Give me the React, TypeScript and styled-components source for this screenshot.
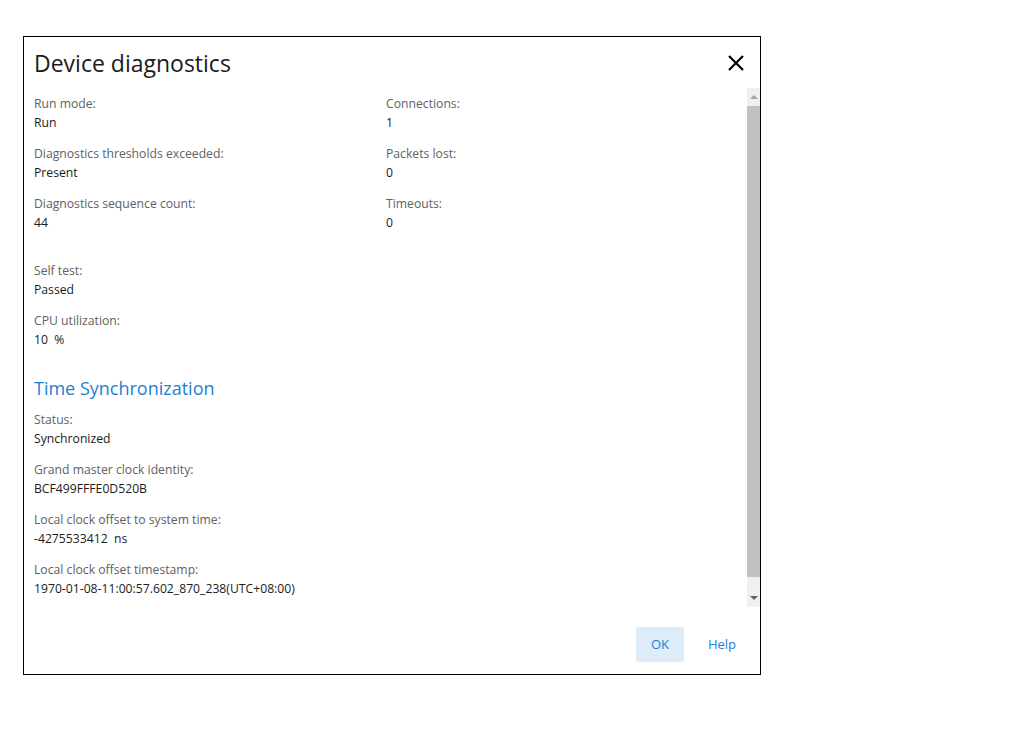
import React from 'react'
import styled, { createGlobalStyle } from 'styled-components'

const GlobalStyle = createGlobalStyle`
  body {
    margin: 0;
    background: #fff;
    font-family: "Open Sans", "Noto Sans", sans-serif;
  }
`

const Page = styled.div`
  padding: 36px 0 0 23px;
`

const Dialog = styled.div`
  width: 736px;
  height: 637px;
  border: 1px solid #000;
  display: flex;
  flex-direction: column;
  background: #fff;
`

const Header = styled.div`
  height: 51px;
  display: flex;
  align-items: center;
  justify-content: space-between;
  padding: 0 14px 0 10px;
`

const Title = styled.h1`
  margin: 0;
  font-size: 23px;
  font-weight: 400;
  color: #1b1b1b;
`

const CloseButton = styled.button`
  border: none;
  background: none;
  padding: 0;
  width: 20px;
  height: 20px;
  display: flex;
  align-items: center;
  justify-content: center;
  cursor: pointer;
`

const Body = styled.div`
  flex: 1;
  display: flex;
  min-height: 0;
`

const Content = styled.div`
  flex: 1;
  padding: 6px 10px 0;
  overflow: hidden;
`

const Grid = styled.div`
  display: grid;
  grid-template-columns: 352px 1fr;
  margin-bottom: 17px;
`

const Field = styled.div`
  margin-bottom: 12px;
  font-size: 12.2px;
  line-height: 19px;
`

const Label = styled.div`
  color: #616161;
`

const Value = styled.div`
  color: #1b1b1b;
  white-space: pre;
`

const SectionTitle = styled.h2`
  margin: 26px 0 9px;
  font-size: 18px;
  line-height: 26px;
  font-weight: 400;
  color: #1a7fd6;
`

const Scrollbar = styled.div`
  width: 13px;
  background: #f0f0f0;
  display: flex;
  flex-direction: column;
`

const ScrollArrow = styled.div<{ $down?: boolean }>`
  height: 18px;
  display: flex;
  align-items: center;
  justify-content: center;
  &::after {
    content: '';
    border-left: 4px solid transparent;
    border-right: 4px solid transparent;
    ${(p) => (p.$down ? 'border-top: 4px solid #606060;' : 'border-bottom: 4px solid #a3a3a3;')}
  }
`

const Track = styled.div`
  flex: 1;
  padding: 0 0 12px;
  display: flex;
`

const Thumb = styled.div`
  flex: 1;
  background: #c1c1c1;
`

const Footer = styled.div`
  display: flex;
  justify-content: flex-end;
  gap: 14px;
  padding: 20px 14px 12px;
`

const Button = styled.button<{ $primary?: boolean }>`
  width: 48px;
  height: 35px;
  padding: 0 0 2px;
  border: none;
  border-radius: 2px;
  font-family: inherit;
  font-size: 13px;
  color: #1a7fd6;
  background: ${(p) => (p.$primary ? '#deecf9' : 'transparent')};
  cursor: pointer;
`

type Item = { label: string; value: string }

const left: Item[] = [
  { label: 'Run mode:', value: 'Run' },
  { label: 'Diagnostics thresholds exceeded:', value: 'Present' },
  { label: 'Diagnostics sequence count:', value: '44' },
]

const right: Item[] = [
  { label: 'Connections:', value: '1' },
  { label: 'Packets lost:', value: '0' },
  { label: 'Timeouts:', value: '0' },
]

const general: Item[] = [
  { label: 'Self test:', value: 'Passed' },
  { label: 'CPU utilization:', value: '10  %' },
]

const timeSync: Item[] = [
  { label: 'Status:', value: 'Synchronized' },
  { label: 'Grand master clock identity:', value: 'BCF499FFFE0D520B' },
  { label: 'Local clock offset to system time:', value: '-4275533412  ns' },
  { label: 'Local clock offset timestamp:', value: '1970-01-08-11:00:57.602_870_238(UTC+08:00)' },
]

const FieldView = ({ item }: { item: Item }) => (
  <Field>
    <Label>{item.label}</Label>
    <Value>{item.value}</Value>
  </Field>
)

const App = () => {
  return (
    <Page>
      <GlobalStyle />
      <Dialog>
        <Header>
          <Title>Device diagnostics</Title>
          <CloseButton aria-label="Close">
            <svg width="18" height="18" viewBox="0 0 18 18">
              <path d="M2 2 L16 16 M16 2 L2 16" stroke="#000" strokeWidth="2.2" />
            </svg>
          </CloseButton>
        </Header>
        <Body>
          <Content>
            <Grid>
              <div>
                {left.map((i) => <FieldView key={i.label} item={i} />)}
              </div>
              <div>
                {right.map((i) => <FieldView key={i.label} item={i} />)}
              </div>
            </Grid>
            {general.map((i) => <FieldView key={i.label} item={i} />)}
            <SectionTitle>Time Synchronization</SectionTitle>
            {timeSync.map((i) => <FieldView key={i.label} item={i} />)}
          </Content>
          <Scrollbar>
            <ScrollArrow />
            <Track>
              <Thumb />
            </Track>
            <ScrollArrow $down />
          </Scrollbar>
        </Body>
        <Footer>
          <Button $primary>OK</Button>
          <Button>Help</Button>
        </Footer>
      </Dialog>
    </Page>
  )
}

export default App
